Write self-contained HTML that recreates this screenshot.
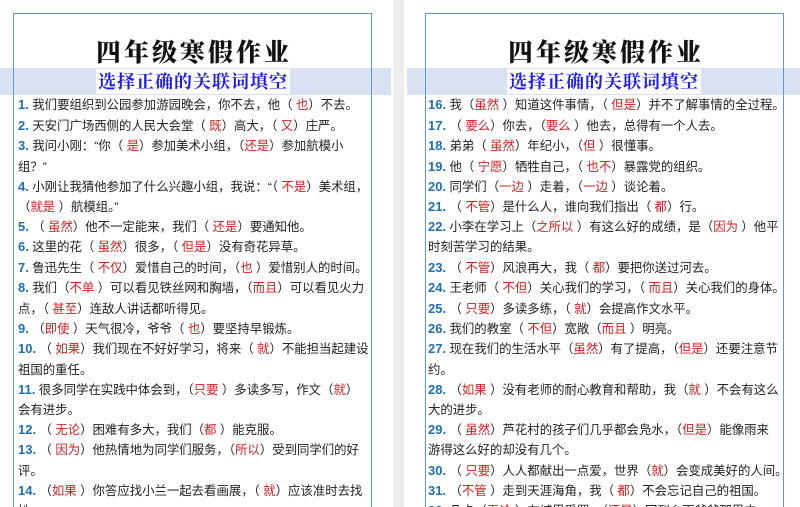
<!DOCTYPE html>
<html><head><meta charset="utf-8"><style>
html,body{margin:0;width:800px;height:507px;overflow:hidden;}
body{background:#fff;position:relative;font-family:"Liberation Sans","Noto Sans CJK SC",sans-serif;}
.strip{position:absolute;left:393px;top:0;width:11px;height:507px;background:#ececef;}
.band{position:absolute;top:68px;height:27px;background:#d9e2f3;}
.box{position:absolute;top:13px;width:359px;height:494px;border:1px solid #5b9bd5;border-bottom:none;box-sizing:border-box;}
.title{position:absolute;top:33px;width:362px;text-align:center;font-family:"Noto Serif CJK SC","Liberation Serif",serif;font-weight:900;font-size:25px;color:#111;letter-spacing:3px;}
.sub{position:absolute;top:69px;height:25px;background:#fff;font-family:"Noto Serif CJK SC","Liberation Serif",serif;font-weight:700;font-size:18px;color:#1a1aff;line-height:25px;letter-spacing:1px;padding:0 2px;}
.l{position:absolute;font-size:12.4px;line-height:20px;color:#222;white-space:nowrap;}
.l b{color:#1f6fb4;font-family:"Liberation Sans",sans-serif;font-size:13px;}
.l i{font-style:normal;color:#d21f1f;}
</style></head><body>
<div class="strip"></div>
<div class="band" style="left:0;width:391px"></div>
<div class="band" style="left:407px;width:393px"></div>
<div class="box" style="left:13px"></div>
<div class="box" style="left:425px"></div>
<div class="title" style="left:13px">四年级寒假作业</div>
<div class="title" style="left:425px">四年级寒假作业</div>
<div class="sub" style="left:96px">选择正确的关联词填空</div>
<div class="sub" style="left:507px">选择正确的关联词填空</div>

<div class="l" style="left:18px;top:95px"><b>1.</b> 我们要组织到公园参加游园晚会，你不去，他（ <i>也</i>）不去。</div>
<div class="l" style="left:18px;top:116px"><b>2.</b> 天安门广场西侧的人民大会堂（ <i>既</i>）高大，（ <i>又</i>）庄严。</div>
<div class="l" style="left:18px;top:136px"><b>3.</b> 我问小刚：“你（ <i>是</i>）参加美术小组，（<i>还是</i>）参加航模小</div>
<div class="l" style="left:18px;top:157px">组？”</div>
<div class="l" style="left:18px;top:177px"><b>4.</b> 小刚让我猜他参加了什么兴趣小组，我说：“（ <i>不是</i>）美术组，</div>
<div class="l" style="left:18px;top:197px">（<i>就是</i> ）航模组。”</div>
<div class="l" style="left:18px;top:217px"><b>5.</b> （ <i>虽然</i>）他不一定能来，我们（ <i>还是</i>）要通知他。</div>
<div class="l" style="left:18px;top:237px"><b>6.</b> 这里的花（ <i>虽然</i>）很多，（ <i>但是</i>）没有奇花异草。</div>
<div class="l" style="left:18px;top:258px"><b>7.</b> 鲁迅先生（ <i>不仅</i>）爱惜自己的时间，（<i>也</i> ）爱惜别人的时间。</div>
<div class="l" style="left:18px;top:278px"><b>8.</b> 我们（<i>不单</i> ）可以看见铁丝网和胸墙，（<i>而且</i>）可以看见火力</div>
<div class="l" style="left:18px;top:299px">点，（ <i>甚至</i>）连敌人讲话都听得见。</div>
<div class="l" style="left:18px;top:319px"><b>9.</b> （<i>即使</i> ）天气很冷，爷爷（ <i>也</i>）要坚持早锻炼。</div>
<div class="l" style="left:18px;top:339px"><b>10.</b> （ <i>如果</i>）我们现在不好好学习，将来（ <i>就</i>）不能担当起建设</div>
<div class="l" style="left:18px;top:360px">祖国的重任。</div>
<div class="l" style="left:18px;top:380px"><b>11.</b> 很多同学在实践中体会到，（<i>只要</i> ）多读多写，作文（<i>就</i>）</div>
<div class="l" style="left:18px;top:400px">会有进步。</div>
<div class="l" style="left:18px;top:420px"><b>12.</b> （ <i>无论</i>）困难有多大，我们（<i>都</i> ）能克服。</div>
<div class="l" style="left:18px;top:440px"><b>13.</b> （ <i>因为</i>）他热情地为同学们服务，（<i>所以</i>）受到同学们的好</div>
<div class="l" style="left:18px;top:461px">评。</div>
<div class="l" style="left:18px;top:481px"><b>14.</b> （<i>如果</i> ）你答应找小兰一起去看画展，（ <i>就</i>）应该准时去找</div>
<div class="l" style="left:18px;top:501px">她。</div>

<div class="l" style="left:428px;top:95px"><b>16.</b> 我（<i>虽然</i> ）知道这件事情，（ <i>但是</i>）并不了解事情的全过程。</div>
<div class="l" style="left:428px;top:116px"><b>17.</b> （ <i>要么</i>）你去，（<i>要么</i> ）他去，总得有一个人去。</div>
<div class="l" style="left:428px;top:136px"><b>18.</b> 弟弟（ <i>虽然</i>）年纪小，（<i>但</i> ）很懂事。</div>
<div class="l" style="left:428px;top:157px"><b>19.</b> 他（ <i>宁愿</i>）牺牲自己，（ <i>也不</i>）暴露党的组织。</div>
<div class="l" style="left:428px;top:177px"><b>20.</b> 同学们（<i>一边</i> ）走着，（<i>一边</i> ）谈论着。</div>
<div class="l" style="left:428px;top:197px"><b>21.</b> （ <i>不管</i>）是什么人，谁向我们指出（ <i>都</i>）行。</div>
<div class="l" style="left:428px;top:217px"><b>22.</b> 小李在学习上（<i>之所以</i> ）有这么好的成绩，是（<i>因为</i> ）他平</div>
<div class="l" style="left:428px;top:237px">时刻苦学习的结果。</div>
<div class="l" style="left:428px;top:258px"><b>23.</b> （ <i>不管</i>）风浪再大，我（ <i>都</i>）要把你送过河去。</div>
<div class="l" style="left:428px;top:278px"><b>24.</b> 王老师（ <i>不但</i>）关心我们的学习，（ <i>而且</i>）关心我们的身体。</div>
<div class="l" style="left:428px;top:299px"><b>25.</b> （ <i>只要</i>）多读多练，（ <i>就</i>）会提高作文水平。</div>
<div class="l" style="left:428px;top:319px"><b>26.</b> 我们的教室（ <i>不但</i>）宽敞（<i>而且</i> ）明亮。</div>
<div class="l" style="left:428px;top:339px"><b>27.</b> 现在我们的生活水平（<i>虽然</i>）有了提高，（<i>但是</i>）还要注意节</div>
<div class="l" style="left:428px;top:360px">约。</div>
<div class="l" style="left:428px;top:380px"><b>28.</b> （<i>如果</i> ）没有老师的耐心教育和帮助，我（<i>就</i> ）不会有这么</div>
<div class="l" style="left:428px;top:400px">大的进步。</div>
<div class="l" style="left:428px;top:420px"><b>29.</b> （ <i>虽然</i>）芦花村的孩子们几乎都会凫水，（<i>但是</i>）能像雨来</div>
<div class="l" style="left:428px;top:440px">游得这么好的却没有几个。</div>
<div class="l" style="left:428px;top:461px"><b>30.</b> （ <i>只要</i>）人人都献出一点爱，世界（<i>就</i>）会变成美好的人间。</div>
<div class="l" style="left:428px;top:481px"><b>31.</b> （<i>不管</i> ）走到天涯海角，我（ <i>都</i>）不会忘记自己的祖国。</div>
<div class="l" style="left:428px;top:501px"><b>32.</b> 凡卡（<i>无论</i> ）在城里受罪，（<i>还是</i>）回到乡下爷爷那里去</div>
</body></html>
